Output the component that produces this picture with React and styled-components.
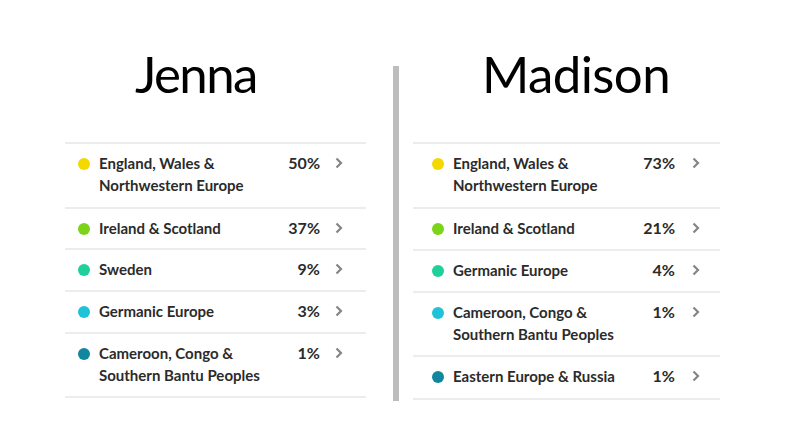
import React from "react";
import styled, { createGlobalStyle } from "styled-components";

const Global = createGlobalStyle`
  html, body { margin: 0; padding: 0; background: #fff; }
  body { width: 792px; height: 446px; overflow: hidden; }
`;

const Page = styled.div`
  display: flex;
  align-items: flex-start;
  width: 792px;
  height: 446px;
  padding-left: 65px;
  box-sizing: border-box;
`;

const Column = styled.section`
  display: flex;
  flex-direction: column;
  width: ${(p) => p.$width}px;
  padding-top: 43px;
`;

const Title = styled.h1`
  margin: 0 0 0 ${(p) => p.$indent}px;
  font-family: Lato, "Liberation Sans", sans-serif;
  font-weight: 400;
  font-size: 51px;
  letter-spacing: ${(p) => p.$spacing}px;
  line-height: 61px;
  color: #000;
`;

const Divider = styled.div`
  width: 6px;
  height: 335px;
  margin-top: 66px;
  margin-left: 27px;
  margin-right: 14px;
  background: #bdbdbd;
`;

const List = styled.ul`
  list-style: none;
  margin: ${(p) => p.$top}px 0 0;
  padding: 0;
  border-top: 2px solid #ececec;
`;

const Row = styled.li`
  display: grid;
  grid-template-columns: 12px 1fr auto 8px;
  align-items: start;
  height: ${(p) => p.$h}px;
  box-sizing: border-box;
  padding: 8px ${(p) => p.$pr}px 0 ${(p) => p.$pl}px;
  border-bottom: 2px solid #ececec;
  font-family: Lato, "Liberation Sans", sans-serif;
  font-weight: 700;
  font-size: 15px;
  line-height: 22px;
  color: #2b2b2b;
`;

const Dot = styled.span`
  width: 12px;
  height: 12px;
  border-radius: 50%;
  margin-top: 6px;
  background: ${(p) => p.$color};
`;

const Label = styled.span`
  padding-left: ${(p) => p.$gap}px;
`;

const Pct = styled.span`
  text-align: right;
  font-size: 16px;
  padding-right: ${(p) => p.$gap}px;
`;

const Chevron = styled.svg`
  width: 8px;
  height: 12px;
  margin-top: 5px;
`;

const Arrow = () => (
  <Chevron viewBox="0 0 8 12">
    <path d="M1.5 1.5 L6 6 L1.5 10.5" fill="none" stroke="#858585" strokeWidth="2.2" />
  </Chevron>
);

const jenna = [
  { c: "#f4d800", t: ["England, Wales &", "Northwestern Europe"], p: "50%", h: 65 },
  { c: "#7bd31a", t: ["Ireland & Scotland"], p: "37%", h: 41 },
  { c: "#1fd09c", t: ["Sweden"], p: "9%", h: 42 },
  { c: "#1ec3d8", t: ["Germanic Europe"], p: "3%", h: 42 },
  { c: "#11869f", t: ["Cameroon, Congo &", "Southern Bantu Peoples"], p: "1%", h: 64 },
];

const madison = [
  { c: "#f4d800", t: ["England, Wales &", "Northwestern Europe"], p: "73%", h: 65 },
  { c: "#7bd31a", t: ["Ireland & Scotland"], p: "21%", h: 42 },
  { c: "#1fd09c", t: ["Germanic Europe"], p: "4%", h: 42 },
  { c: "#1ec3d8", t: ["Cameroon, Congo &", "Southern Bantu Peoples"], p: "1%", h: 64 },
  { c: "#11869f", t: ["Eastern Europe & Russia"], p: "1%", h: 43 },
];

const Ethnicity = ({ items, pl, pr, labelGap, pctGap, top }) => (
  <List $top={top}>
    {items.map((it, i) => (
      <Row key={i} $h={it.h} $pl={pl} $pr={pr}>
        <Dot $color={it.c} />
        <Label $gap={labelGap}>
          {it.t.map((line, j) => (
            <React.Fragment key={j}>
              {j > 0 && <br />}
              {line}
            </React.Fragment>
          ))}
        </Label>
        <Pct $gap={pctGap}>{it.p}</Pct>
        <Arrow />
      </Row>
    ))}
  </List>
);

export default function App() {
  return (
    <>
      <Global />
      <Page>
        <Column $width={301}>
          <Title $indent={70} $spacing={-1.6}>Jenna</Title>
          <Ethnicity items={jenna} pl={13} pr={23} labelGap={9} pctGap={15} top={38} />
        </Column>
        <Divider />
        <Column $width={307}>
          <Title $indent={69} $spacing={-0.6}>Madison</Title>
          <Ethnicity items={madison} pl={19} pr={20} labelGap={9} pctGap={17} top={38} />
        </Column>
      </Page>
    </>
  );
}
